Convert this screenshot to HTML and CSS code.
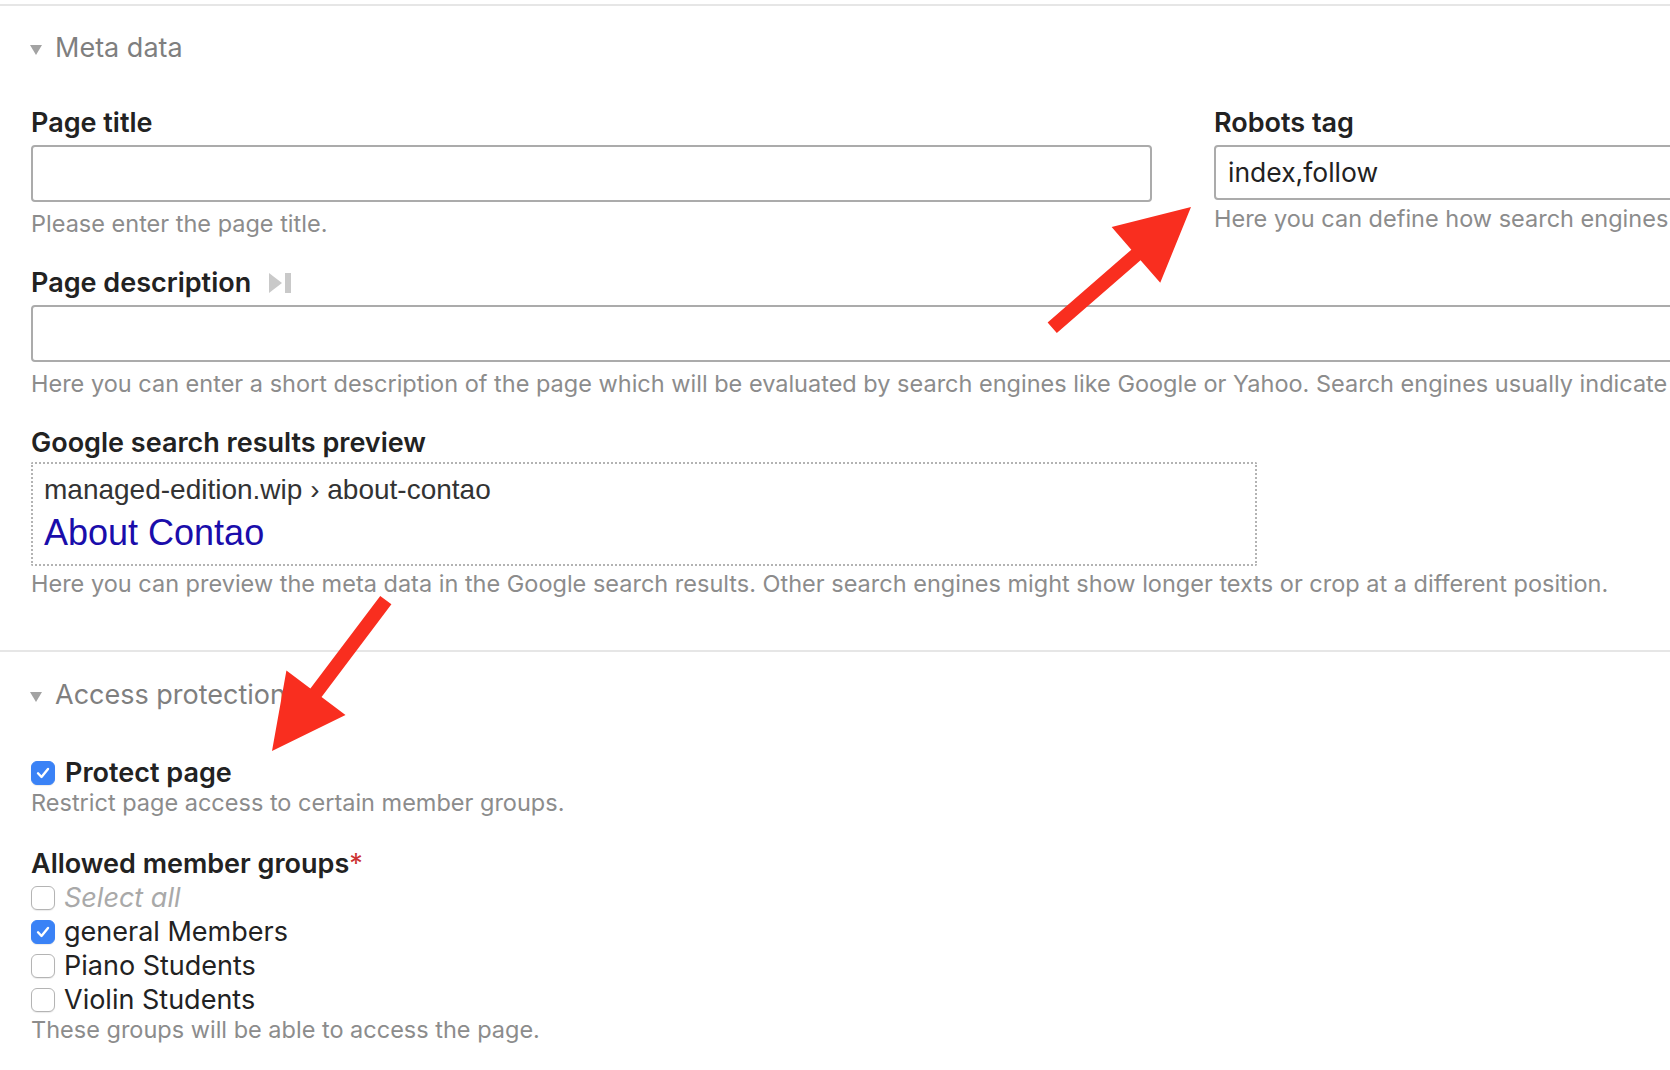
FILE: index.html
```html
<!DOCTYPE html>
<html lang="en">
<head>
<meta charset="utf-8">
<title>Page settings</title>
<link rel="stylesheet" href="styles.css">
</head>
<body>
<div class="page">
  <section class="panel panel-meta">
    <div class="legend"><span class="tri"></span><span>Meta data</span></div>
    <div class="fields">
      <div class="row">
        <div class="widget w50">
          <h3 class="label">Page title</h3>
          <div class="input"></div>
          <p class="help">Please enter the page title.</p>
        </div>
        <div class="widget w50">
          <h3 class="label">Robots tag</h3>
          <div class="input input-robots">index,follow</div>
          <p class="help help-robots">Here you can define how search engines handle the page.</p>
        </div>
      </div>
      <div class="widget">
        <h3 class="label">Page description <svg class="toggle-icon" width="22" height="20" viewBox="0 0 22 20"><polygon points="0,0 13,10 0,20" fill="#c9c9c9"/><rect x="16" y="0" width="6" height="20" fill="#c9c9c9"/></svg></h3>
        <div class="input input-wide"></div>
        <p class="help">Here you can enter a short description of the page which will be evaluated by search engines like Google or Yahoo. Search engines usually indicate between 150 and 300 characters.</p>
      </div>
      <div class="widget">
        <h3 class="label">Google search results preview</h3>
        <div class="serp">
          <div class="serp-url">managed-edition.wip › about-contao</div>
          <div class="serp-title">About Contao</div>
        </div>
        <p class="help help-serp">Here you can preview the meta data in the Google search results. Other search engines might show longer texts or crop at a different position.</p>
      </div>
    </div>
  </section>

  <section class="panel panel-access">
    <div class="legend"><span class="tri"></span><span>Access protection</span></div>
    <div class="fields">
      <div class="widget">
        <div class="check-row">
          <span class="cb checked"><svg width="24" height="24" viewBox="0 0 24 24"><path d="M7 12.3 L10.5 16 L17 8" fill="none" stroke="#fff" stroke-width="2.4" stroke-linecap="round" stroke-linejoin="round"/></svg></span>
          <span class="check-label">Protect page</span>
        </div>
        <p class="help help-tight">Restrict page access to certain member groups.</p>
      </div>
      <div class="widget widget-groups">
        <h3 class="label">Allowed member groups<span class="req">*</span></h3>
        <ul class="options">
          <li class="option option-all"><span class="cb"></span><span class="opt-text">Select all</span></li>
          <li class="option"><span class="cb checked"><svg width="24" height="24" viewBox="0 0 24 24"><path d="M7 12.3 L10.5 16 L17 8" fill="none" stroke="#fff" stroke-width="2.4" stroke-linecap="round" stroke-linejoin="round"/></svg></span><span class="opt-text">general Members</span></li>
          <li class="option"><span class="cb"></span><span class="opt-text">Piano Students</span></li>
          <li class="option"><span class="cb"></span><span class="opt-text">Violin Students</span></li>
        </ul>
        <p class="help help-last">These groups will be able to access the page.</p>
      </div>
    </div>
  </section>

  <svg class="arrows" width="1670" height="1070" viewBox="0 0 1670 1070">
    <g transform="translate(1191 207) rotate(-41.04)">
      <polygon points="0,0 -73,-37 -73,-7 -184,-7 -184,7 -73,7 -73,37" fill="#f92e1f"/>
    </g>
    <g transform="translate(272 751) rotate(127.03)">
      <polygon points="0,0 -73,-37 -73,-7 -189,-7 -189,7 -73,7 -73,37" fill="#f92e1f"/>
    </g>
  </svg>
</div>
</body>
</html>
```

FILE: styles.css
```css
* { box-sizing: border-box; }

html, body {
  margin: 0;
  padding: 0;
  background: #fff;
}

body {
  width: 1670px;
  height: 1070px;
  overflow: hidden;
  font-family: "Inter", "Noto Sans", sans-serif;
  color: #222;
}

.page {
  position: relative;
  padding-top: 4px;
  width: 2366px;
}

.panel {
  border-top: 2px solid #e6e6e6;
  padding-top: 27px;
}

.panel-meta {
  padding-bottom: 52px;
}

.panel-access {
  padding-top: 28px;
}

.legend {
  display: flex;
  align-items: center;
  height: 30px;
  font-size: 27px;
  line-height: 30px;
  color: #7f7f7f;
  font-weight: 400;
  padding-left: 30px;
  margin-bottom: 45px;
}

.legend .tri {
  width: 0;
  height: 0;
  border-left: 6.5px solid transparent;
  border-right: 6.5px solid transparent;
  border-top: 10px solid #a3a3a3;
  margin-right: 13px;
  margin-top: 3px;
}

.panel-access .legend {
  margin-bottom: 48px;
}

.fields {
  display: flex;
  flex-direction: column;
  gap: 30px;
}

.row {
  display: flex;
}

.widget {
  margin: 0 31px;
}

.w50 {
  width: 1121px;
  flex: none;
}

.row .w50 + .w50 {
  margin-left: 31px;
}

.label {
  margin: 0 0 7px;
  font-size: 27px;
  line-height: 30px;
  font-weight: 600;
  color: #222;
  display: flex;
  align-items: center;
}

.toggle-icon {
  margin-left: 18px;
}

.req {
  color: #cc3333;
  font-weight: 400;
}

.input {
  height: 57px;
  border: 2px solid #ababab;
  border-radius: 4px;
  padding: 0 12px;
  font-size: 26.5px;
  line-height: 53px;
  color: #222;
}

.input-robots {
  height: 55px;
  line-height: 51px;
  width: 1300px;
}

.input-wide {
  width: 2304px;
}

.help {
  margin: 8px 0 0;
  font-size: 23.5px;
  line-height: 28px;
  color: #8c8c8c;
  white-space: nowrap;
}

.help-robots {
  margin-top: 5px;
}

.help-serp {
  margin-top: 4px;
}

.help-tight {
  margin-top: 1px;
}

.help-last {
  margin-top: -1px;
}

.serp {
  width: 1226px;
  height: 104px;
  border: 2px dotted #b3b3b3;
  border-radius: 2px;
  padding: 10px 11px 0;
  margin-top: -3px;
  font-family: "Liberation Sans", Arial, sans-serif;
}

.serp-url {
  font-size: 28px;
  line-height: 32px;
  color: #333;
}

.serp-title {
  margin-top: 6px;
  font-size: 36px;
  line-height: 42px;
  color: #1a0dab;
}

.check-row {
  display: flex;
  align-items: center;
  height: 30px;
}

.check-label {
  font-size: 27px;
  font-weight: 600;
  line-height: 30px;
  color: #222;
  margin-left: 10px;
}

.cb {
  width: 24px;
  height: 24px;
  flex: none;
  border-radius: 6px;
  border: 1px solid #b4b4b4;
  background: #fff;
  box-shadow: 0 1px 1px rgba(0,0,0,0.08);
  display: flex;
  align-items: center;
  justify-content: center;
}

.cb.checked {
  background: #3a82f6;
  border-color: #3a82f6;
}

.cb svg {
  display: block;
  flex: none;
}

.widget-groups {
  margin-top: 2px;
}

.widget-groups .label {
  margin-bottom: 2px;
}

.options {
  list-style: none;
  margin: 0;
  padding: 0;
}

.option {
  display: flex;
  align-items: center;
  height: 34px;
}

.opt-text {
  font-size: 27px;
  line-height: 34px;
  margin-left: 9px;
  color: #222;
}

.option-all .opt-text {
  font-style: italic;
  color: #a9a9a9;
}

.arrows {
  position: absolute;
  left: 0;
  top: 0;
  pointer-events: none;
}
```
